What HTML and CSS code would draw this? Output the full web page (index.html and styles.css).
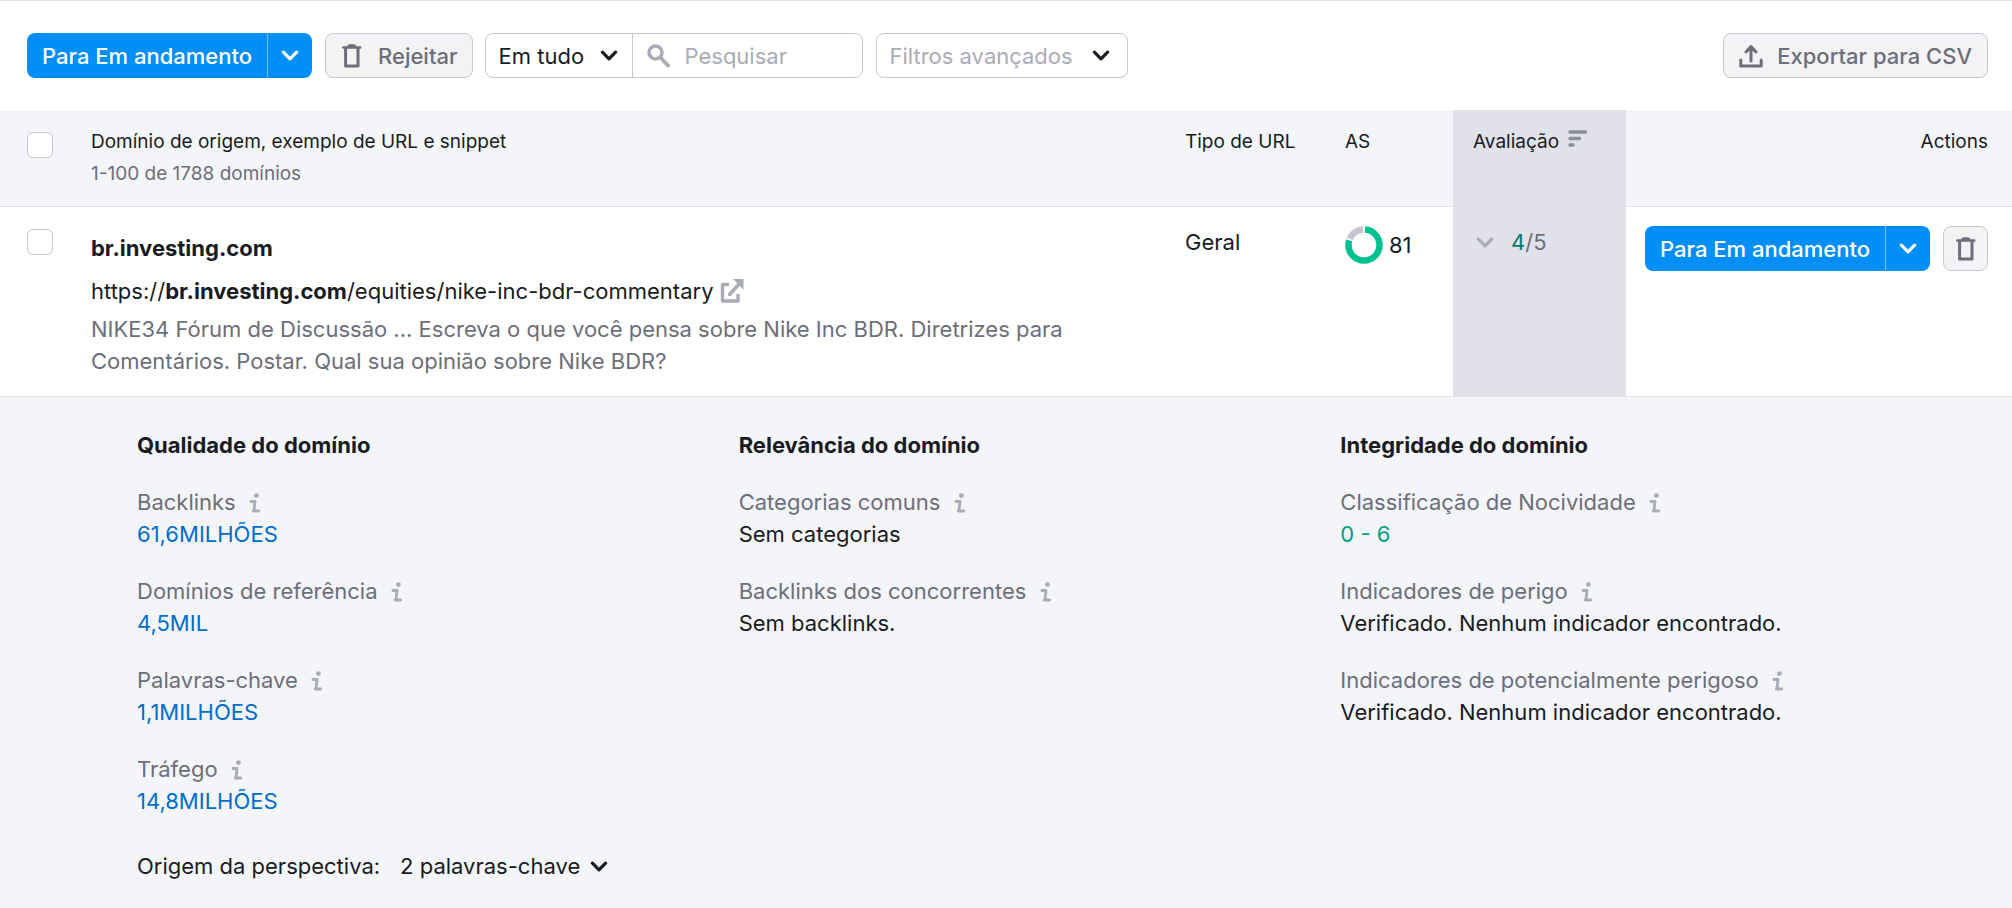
FILE: index.html
```html
<!DOCTYPE html>
<html lang="pt-BR">
<head>
<meta charset="utf-8">
<title>Domínios em potencial</title>
<link rel="stylesheet" href="styles.css">
</head>
<body>
<svg class="defs" aria-hidden="true">
  <symbol id="chevron" viewBox="0 0 16 10"><path d="M2 2l6 6 6-6" fill="none" stroke="currentColor" stroke-width="2.900" stroke-linecap="round" stroke-linejoin="round"/></symbol>
  <symbol id="trash" viewBox="0 0 20 24"><path d="M1.300 3.500h17M6.500 3q0-1.500 1.500-1.500h3.600q1.500 0 1.500 1.500" fill="none" stroke="currentColor" stroke-width="2.400" stroke-linecap="round"/><path d="M3.600 4v18h12.400V4" fill="none" stroke="currentColor" stroke-width="3" stroke-linejoin="round"/></symbol>
  <symbol id="info" viewBox="0 0 12 20"><circle cx="7.400" cy="2.600" r="2.400" fill="currentColor"/><path d="M2 8.500h4L5 17.800M4.200 18h5.500" fill="none" stroke="currentColor" stroke-width="2.800" stroke-linecap="round" stroke-linejoin="round"/></symbol>
</svg>
<main class="panel">
  <div class="toolbar">
    <div class="split">
      <button type="button" class="split-main">Para Em andamento</button>
      <button type="button" class="split-more" aria-label="Mais opções"><svg class="chevron"><use href="#chevron"/></svg></button>
    </div>
    <button type="button" class="btn reject"><svg class="trash"><use href="#trash"/></svg>Rejeitar</button>
    <div class="search">
      <label class="scope">
        <select aria-label="Pesquisar em"><option>Em tudo</option></select>
        <svg class="chevron"><use href="#chevron"/></svg>
      </label>
      <label class="query">
        <svg class="loupe" viewBox="0 0 24 24"><circle cx="8.500" cy="8.500" r="6.500" fill="none" stroke="currentColor" stroke-width="3.500"/><path d="M13.500 13.500l7.500 8" stroke="currentColor" stroke-width="4" stroke-linecap="round"/></svg>
        <input type="text" placeholder="Pesquisar" aria-label="Pesquisar">
      </label>
    </div>
    <button type="button" class="btn filters">Filtros avançados<svg class="chevron"><use href="#chevron"/></svg></button>
    <button type="button" class="btn export"><svg class="upload" viewBox="0 0 24 24"><path d="M12 17V3M7 8l5-5.500L17 8M1.800 16v6h20.400v-6" fill="none" stroke="currentColor" stroke-width="3" stroke-linecap="round" stroke-linejoin="round"/></svg>Exportar para CSV</button>
  </div>

  <table class="grid">
    <colgroup><col class="c-check"><col><col class="c-type"><col class="c-as"><col class="c-rating"><col class="c-actions"></colgroup>
    <thead>
      <tr>
        <th class="check"><input type="checkbox" aria-label="Selecionar todos"></th>
        <th scope="col">Domínio de origem, exemplo de URL e snippet<div class="muted">1-100 de 1788 domínios</div></th>
        <th scope="col" class="padded">Tipo de URL</th>
        <th scope="col" class="padded">AS</th>
        <th scope="col" class="padded rating">Avaliação <svg class="sort" viewBox="0 0 20 18"><path d="M2 2h15.500M2 8.500h9.500M2 15h3" stroke="currentColor" stroke-width="3.400" stroke-linecap="round"/></svg></th>
        <th scope="col" class="actions">Actions</th>
      </tr>
    </thead>
    <tbody>
      <tr class="row">
        <td class="check"><input type="checkbox" aria-label="Selecionar br.investing.com"></td>
        <td class="source">
          <div class="domain">br.investing.com</div>
          <div class="url">https://<b>br.investing.com</b>/equities/nike-inc-bdr-commentary <a href="#" aria-label="Abrir em nova aba"><svg class="external" viewBox="0 0 24 24"><path d="M9 5.500H2.500V22H18v-7" fill="none" stroke="currentColor" stroke-width="3.400" stroke-linejoin="round"/><path d="M9.500 15.500L20 4" stroke="currentColor" stroke-width="3.400" stroke-linecap="round"/><path d="M13 0h10.500v10.500L20 7l-3.500-3.500z" fill="currentColor"/></svg></a></div>
          <p class="snippet">NIKE34 Fórum de Discussão ... Escreva o que você pensa sobre Nike Inc BDR. Diretrizes para Comentários. Postar. Qual sua opinião sobre Nike BDR?</p>
        </td>
        <td class="padded">Geral</td>
        <td class="padded">
          <div class="score"><svg class="donut" viewBox="0 0 38 38"><circle class="ring rest" cx="19" cy="19" r="15.500" pathLength="100"/><circle class="ring value" cx="19" cy="19" r="15.500" pathLength="100"/></svg>81</div>
        </td>
        <td class="padded rating">
          <button type="button" class="rate" aria-expanded="true"><svg class="chevron"><use href="#chevron"/></svg><span><span class="good">4</span>/5</span></button>
        </td>
        <td class="actions">
          <div class="row-actions">
            <div class="split">
              <button type="button" class="split-main">Para Em andamento</button>
              <button type="button" class="split-more" aria-label="Mais opções"><svg class="chevron"><use href="#chevron"/></svg></button>
            </div>
            <button type="button" class="btn square" aria-label="Rejeitar"><svg class="trash"><use href="#trash"/></svg></button>
          </div>
        </td>
      </tr>
      <tr class="details">
        <td colspan="6">
          <div class="columns">
            <section>
              <h3>Qualidade do domínio</h3>
              <dl>
                <div><dt>Backlinks <svg class="info"><use href="#info"/></svg></dt><dd><a href="#">61,6MILHÕES</a></dd></div>
                <div><dt>Domínios de referência <svg class="info"><use href="#info"/></svg></dt><dd><a href="#">4,5MIL</a></dd></div>
                <div><dt>Palavras-chave <svg class="info"><use href="#info"/></svg></dt><dd><a href="#">1,1MILHÕES</a></dd></div>
                <div><dt>Tráfego <svg class="info"><use href="#info"/></svg></dt><dd><a href="#">14,8MILHÕES</a></dd></div>
              </dl>
            </section>
            <section>
              <h3>Relevância do domínio</h3>
              <dl>
                <div><dt>Categorias comuns <svg class="info"><use href="#info"/></svg></dt><dd>Sem categorias</dd></div>
                <div><dt>Backlinks dos concorrentes <svg class="info"><use href="#info"/></svg></dt><dd>Sem backlinks.</dd></div>
              </dl>
            </section>
            <section>
              <h3>Integridade do domínio</h3>
              <dl>
                <div><dt>Classificação de Nocividade <svg class="info"><use href="#info"/></svg></dt><dd class="safe">0 - 6</dd></div>
                <div><dt>Indicadores de perigo <svg class="info"><use href="#info"/></svg></dt><dd>Verificado. Nenhum indicador encontrado.</dd></div>
                <div><dt>Indicadores de potencialmente perigoso <svg class="info"><use href="#info"/></svg></dt><dd>Verificado. Nenhum indicador encontrado.</dd></div>
              </dl>
            </section>
          </div>
          <div class="origin">
            <span>Origem da perspectiva:</span>
            <button type="button" class="keywords">2 palavras-chave<svg class="chevron"><use href="#chevron"/></svg></button>
          </div>
        </td>
      </tr>
    </tbody>
  </table>
</main>
</body>
</html>
```
FILE: styles.css
```css
* { box-sizing: border-box; }

body {
  margin: 0;
  min-height: 100vh;
  background: #f4f5f9;
  color: #191b23;
  font: 22px/32px Inter, "Liberation Sans", sans-serif;
}

button, input, select {
  margin: 0;
  padding: 0;
  border: 0;
  background: none;
  color: inherit;
  font: inherit;
}

a { color: #006dca; text-decoration: none; }
svg { flex: none; }
.defs { display: none; }
.chevron { width: 18px; height: 11px; }
.trash { width: 20px; height: 24px; }

.panel { border-top: 1px solid #e0e1e9; background: #fff; }

.toolbar {
  display: flex;
  padding: 32px 24px 32px 27px;
}

.split {
  display: flex;
  flex: none;
  height: 45px;
  border-radius: 8px;
  background: #008ff8;
  color: #fff;
  font-weight: 500;
  overflow: hidden;
}
.split-main { padding: 0 15px; white-space: nowrap; }
.split-more {
  display: flex;
  align-items: center;
  justify-content: center;
  width: 45px;
  border-left: 1px solid #7cc5fb;
}

.btn {
  display: flex;
  flex: none;
  align-items: center;
  height: 45px;
  border: 1px solid #c4c7cf;
  border-radius: 8px;
  background: #f3f3f5;
  color: #6c6e79;
  font-weight: 500;
  white-space: nowrap;
}
.reject { gap: 16px; margin-left: 13px; padding: 0 14px 0 16px; }
.export { gap: 14px; margin-left: auto; padding: 0 15px; }
.square { width: 45px; justify-content: center; }
.filters {
  gap: 19px;
  margin-left: 13px;
  padding: 0 17px 0 13px;
  background: #fff;
  color: #a9abb6;
  font-weight: 400;
}
.filters .chevron { color: #191b23; }
.upload { width: 24px; height: 26px; }

.search {
  display: flex;
  flex: none;
  width: 378px;
  height: 45px;
  margin-left: 12px;
  border: 1px solid #c4c7cf;
  border-radius: 8px;
}
.scope {
  position: relative;
  display: flex;
  flex: none;
  align-items: center;
  width: 147px;
  border-right: 1px solid #c4c7cf;
}
.scope select { width: 100%; height: 100%; padding-left: 13px; appearance: none; }
.scope .chevron { position: absolute; right: 14px; pointer-events: none; }
.query { display: flex; flex: 1; align-items: center; gap: 14px; min-width: 0; padding-left: 14px; color: #a9abb6; }
.query input { flex: 1; width: 100%; min-width: 0; }
.query input::placeholder { color: #a9abb6; opacity: 1; }
.loupe { width: 24px; height: 24px; }

.grid { width: 100%; border-collapse: separate; border-spacing: 0; table-layout: fixed; }
.c-check { width: 91px; }
.c-type { width: 160px; }
.c-as { width: 128px; }
.c-rating { width: 173px; }
.c-actions { width: 386px; }

th, td { padding: 0; text-align: left; vertical-align: top; border-bottom: 1px solid #e0e1e9; }
th {
  padding: 16px 0;
  background: #f4f5f9;
  font-size: 19px;
  font-weight: 400;
}
.muted { color: #6c6e79; }
.row td { padding: 19px 0; }
th.padded, .row td.padded { padding-left: 20px; }
th.rating, .row td.rating { background: #e0e1e9; }
th.actions, .row td.actions { padding-right: 24px; text-align: right; }
.sort { width: 20px; height: 18px; margin-left: 4px; color: #8a8e9b; }

.check input {
  display: block;
  width: 26px;
  height: 26px;
  margin-left: 27px;
  border: 1px solid #c4c7cf;
  border-radius: 6px;
  background: #fff;
  appearance: none;
}
th.check { padding-top: 22px; }
.row td.check { padding-top: 22px; }

.row td.source { padding-top: 25px; }
.domain { font-weight: 700; margin-bottom: 11px; }
.url a { color: #a9abb6; }
.external { width: 24px; height: 24px; vertical-align: -4px; }
.snippet { margin: 6px 0 0; color: #6c6e79; }

.score { display: flex; align-items: center; gap: 6px; height: 38px; }
.donut { width: 38px; height: 38px; transform: rotate(-90deg); }
.ring { fill: none; stroke-width: 6.500; }
.ring.value { stroke: #00c192; stroke-dasharray: 79 21; stroke-dashoffset: -1; }
.ring.rest { stroke: #c4c7cf; stroke-dasharray: 17.500 82.500; stroke-dashoffset: -81.500; }

.rate { display: flex; align-items: center; gap: 17px; padding-left: 3px; color: #6c6e79; }
.rate .chevron { color: #a9abb6; }
.good { color: #007c65; }

.row-actions { display: flex; justify-content: flex-end; gap: 13px; }

.details td { padding: 32px 24px 24px 137px; border: 0; background: #f4f5f9; }
.columns { display: grid; grid-template-columns: repeat(3, 1fr); gap: 26px; margin-right: 72px; }
h3 { margin: 0 0 25px; font: inherit; font-weight: 700; }
dl { display: grid; gap: 25px; margin: 0; }
dt { color: #6c6e79; }
dd { margin: 0; }
.safe { color: #009f81; }
.info { width: 12px; height: 20px; margin-left: 7px; vertical-align: -3px; color: #a9abb6; }

.origin { display: flex; gap: 20px; margin-top: 33px; }
.keywords { display: flex; align-items: center; gap: 10px; }
```
